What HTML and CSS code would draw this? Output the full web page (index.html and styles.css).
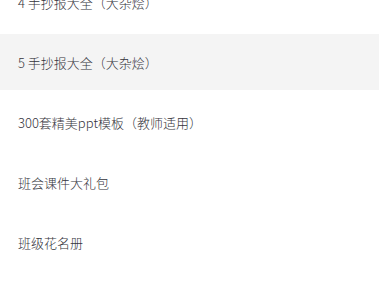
FILE: index.html
```html
<!DOCTYPE html>
<html>

<head>
    <meta charset="utf-8">
    <link rel="stylesheet" href="styles.css">
</head>

<body>
    <ul class="list">
        <li class="item">4 手抄报大全（大杂烩）</li>
        <li class="item active">5 手抄报大全（大杂烩）</li>
        <li class="item">300套精美ppt模板（教师适用）</li>
        <li class="item">班会课件大礼包</li>
        <li class="item">班级花名册</li>
    </ul>
</body>

</html>
```

FILE: styles.css
```css
body {
    margin: 0;
    background: #fff;
    font-family: "Noto Sans CJK SC", "Noto Sans", sans-serif;
    overflow: hidden
}

.list {
    list-style: none;
    margin: -26px 0 0 0;
    padding: 0
}

.item {
    height: 56px;
    margin-bottom: 4px;
    padding-left: 18px;
    display: flex;
    align-items: center;
    font-size: 13px;
    font-weight: 300;
    color: #35353c
}

.active {
    background: #f4f4f4
}
```
